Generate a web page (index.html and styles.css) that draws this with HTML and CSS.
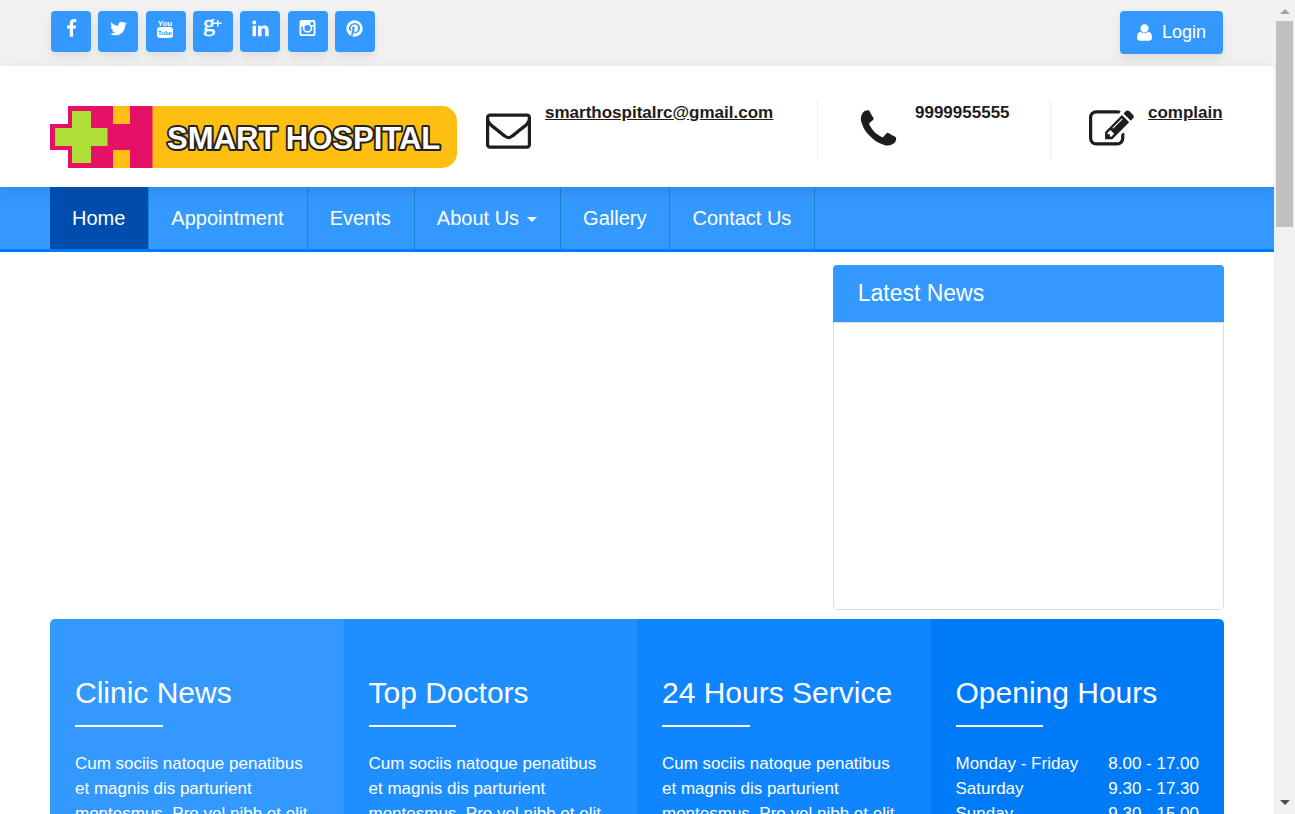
FILE: index.html
```html
<!DOCTYPE html>
<html lang="en">
<head>
<meta charset="utf-8">
<meta name="viewport" content="width=device-width, initial-scale=1">
<title>Smart Hospital</title>
<link rel="stylesheet" href="styles.css">
</head>
<body>
<div class="page">
  <div class="topbar container">
    <ul class="social">
      <li><a class="social-link" href="#" aria-label="Facebook"><svg class="icon" viewBox="0 0 1792 1792"><path d="M1343 12v264h-157q-86 0-116 36t-30 108v189h293l-39 296h-254v759h-306v-759h-255v-296h255v-218q0-186 104-288.500t277-102.500q147 0 228 12z"/></svg></a></li>
      <li><a class="social-link" href="#" aria-label="Twitter"><svg class="icon" viewBox="0 0 1792 1792"><path d="M1684 408q-67 98-162 167 1 14 1 42 0 130-38 259.500t-115.500 248.500-184.500 210.500-258 146-323 54.500q-271 0-496-145 35 4 78 4 225 0 401-138-105-2-188-64.500t-114-159.500q33 5 61 5 43 0 85-11-112-23-185.500-111.500t-73.500-205.500v-4q68 38 146 41-66-44-105-115t-39-154q0-88 44-163 121 149 294.500 238.500t371.500 99.500q-8-38-8-74 0-134 94.500-228.500t228.500-94.500q140 0 236 102 109-21 205-78-37 115-142 178 93-10 186-50z"/></svg></a></li>
      <li><a class="social-link" href="#" aria-label="YouTube"><svg class="icon" viewBox="0 0 19 19"><text class="yt-you" x="9" y="7" text-anchor="middle">You</text><rect x="1" y="8" width="16" height="11" rx="3"/><text class="yt-tube" x="9" y="16" text-anchor="middle">Tube</text></svg></a></li>
      <li><a class="social-link" href="#" aria-label="Google Plus"><svg class="icon" viewBox="0 0 19 19"><text class="gp-g" x="0" y="12">g</text><path d="M14 1h1.500v2.500h3v1.500h-3v2.500h-1.500v-2.500h-3v-1.500h3z"/></svg></a></li>
      <li><a class="social-link" href="#" aria-label="LinkedIn"><svg class="icon" viewBox="0 0 1792 1792"><path d="M477 625v991h-330v-991h330zm21-306q1 73-50.500 122t-135.500 49h-2q-82 0-132-49t-50-122q0-74 51.500-122.500t134.500-48.500 133 48.500 51 122.500zm1166 729v568h-329v-530q0-105-40.500-164.500t-126.500-59.500q-63 0-105.500 34.500t-63.500 85.500q-11 30-11 81v553h-329q2-399 2-647t-1-296l-1-48h329v144h-2q20-32 41-56t56.500-52 87-43.500 114.500-15.500q171 0 275 113.500t104 332.500z"/></svg></a></li>
      <li><a class="social-link" href="#" aria-label="Instagram"><svg class="icon" viewBox="0 0 19 19"><path fill-rule="evenodd" d="M3.500 1h12a2 2 0 0 1 2 2v12a2 2 0 0 1-2 2h-12a2 2 0 0 1-2-2v-12a2 2 0 0 1 2-2zM3.300 7.500v7q0 .7.700.7h11q.7 0 .7-.7v-7h-1.600a4.800 4.800 0 1 1-9.200 0zM13 3q-.6 0-.6.600v1.800q0 .6.600.6h2q.6 0 .6-.6v-1.800q0-.6-.6-.6zM9.500 5.900a3.100 3.100 0 1 0 0 6.200a3.100 3.100 0 1 0 0-6.200z"/></svg></a></li>
      <li><a class="social-link" href="#" aria-label="Pinterest"><svg class="icon" viewBox="0 0 1792 1792"><path d="M1664 896q0 209-103 385.500t-279.500 279.500-385.500 103q-111 0-218-32 59-93 78-164 9-34 54-211 20 39 73 67.500t114 28.500q121 0 216-68.500t147-188.500 52-270q0-114-59.500-214t-172.500-163-255-63q-105 0-196 29t-154.500 77-109 110.500-67 129.500-21.500 134q0 104 40 183t117 111q30 12 38-20 2-7 8-31t8-30q6-23-11-43-51-61-51-151 0-151 104.500-259.500t273.500-108.500q151 0 235.500 82t84.500 213q0 170-68.500 289t-175.500 119q-61 0-98-43.500t-23-104.500q8-35 26.500-93.500t30-103 11.500-75.500q0-50-27-83t-77-33q-62 0-105 57t-43 142q0 73 25 122l-99 418q-17 70-13 177-206-91-333-281t-127-423q0-209 103-385.500t279.500-279.500 385.500-103 385.500 103 279.500 279.500 103 385.500z"/></svg></a></li>
    </ul>
    <a class="login" href="#"><svg class="icon" viewBox="0 0 1792 1792" aria-hidden="true"><path d="M1600 1399q0 109-62.500 187t-150.500 78h-982q-88 0-150.500-78t-62.500-187q0-85 8.500-160.500t31.500-152 58.500-131 94-89 134.500-34.500q160 128 377 128t377-128q76 0 134.500 34.500t94 89 58.500 131 31.500 152 8.500 160.500zm-320-887q0 159-112.500 271.500t-271.500 112.500-271.500-112.500-112.500-271.500 112.500-271.500 271.500-112.500 271.500 112.500 112.500 271.500z"/></svg>Login</a>
  </div>

  <header class="header container">
    <a class="brand" href="#" aria-label="Smart Hospital">
      <svg class="logo" viewBox="0 0 407 62">
        <path fill="#ffbf12" d="M100 0h292a15 15 0 0 1 15 15v32a15 15 0 0 1-15 15h-292z"/>
        <path fill="#e51166" d="M18 0h84.500v62h-84.500v-18h-18v-26h18z"/>
        <path fill="#ffbf12" d="M63 0h17v18h-17zM63 44h17v18h-17z"/>
        <path fill="#afdf36" d="M22 5h19v17h16.500v18h-16.500v17h-19v-17h-17v-18h17z"/>
        <text class="logo-text" x="117" y="43">SMART HOSPITAL</text>
      </svg>
    </a>
    <ul class="contacts">
      <li class="contact"><svg class="contact-icon" viewBox="0 0 1792 1792" aria-hidden="true"><path d="M1664 1504v-768q-32 36-69 66-268 206-426 338-51 43-83 67t-86.500 48.500-102.500 24.500h-2q-48 0-102.500-24.500t-86.500-48.500-83-67q-158-132-426-338-37-30-69-66v768q0 13 9.500 22.500t22.500 9.500h1472q13 0 22.500-9.500t9.500-22.500zm0-1051v-24.500l-.5-13-3-12.500-5.500-9-9-7.500-14-2.500h-1472q-13 0-22.500 9.500t-9.500 22.500q0 168 147 284 193 152 401 317 6 5 35 29.500t46 37.500 44.500 31.500 50.500 27.500 43 9h2q20 0 43-9t50.500-27.500 44.500-31.500 46-37.500 35-29.500q208-165 401-317 54-43 100.500-115.500t46.500-131.500zm128-37v1088q0 66-47 113t-113 47h-1472q-66 0-113-47t-47-113v-1088q0-66 47-113t113-47h1472q66 0 113 47t47 113z"/></svg><a class="contact-text contact-mail" href="#">smarthospitalrc@gmail.com</a></li>
      <li class="contact"><svg class="contact-icon" viewBox="0 0 1792 1792" aria-hidden="true"><path d="M1600 1240q0 27-10 70.500t-21 68.500q-21 50-122 106-94 51-186 51-27 0-53-3.500t-57.500-12.500-47-14.500-55.500-20.500-49-18q-98-35-175-83-127-79-264-216t-216-264q-48-77-83-175-3-9-18-49t-20.500-55.500-14.500-47-12.500-57.500-3.500-53q0-92 51-186 56-101 106-122 25-11 68.500-21t70.500-10q14 0 21 3 18 6 53 76 11 19 30 54t35 63.500 31 53.500q3 4 17.500 25t21.500 35.500 7 28.500q0 20-28.500 50t-62 55-62 53-28.500 46q0 9 5 22.500t8.500 20.500 14 24 11.500 19q76 137 174 235t235 174q2 1 19 11.500t24 14 20.500 8.500 22.500 5q18 0 46-28.500t53-62 55-62 50-28.500q14 0 28.500 7t35.500 21.500 25 17.500q25 15 53.500 31t63.500 35 54 30q70 35 76 53 3 7 3 21z"/></svg><span class="contact-text contact-phone">9999955555</span></li>
      <li class="contact"><svg class="contact-icon" viewBox="0 0 1792 1792" aria-hidden="true"><path d="M888 1184l116-116-152-152-116 116v56h96v96h56zm440-720q-16-16-33 1l-350 350q-17 17-1 33t33-1l350-350q17-17 1-33zm80 594v190q0 119-84.500 203.500t-203.500 84.500h-832q-119 0-203.500-84.500t-84.500-203.500v-832q0-119 84.500-203.500t203.500-84.500h832q63 0 117 25 15 7 18 23 3 17-9 29l-49 49q-14 14-32 8-23-6-45-6h-832q-66 0-113 47t-47 113v832q0 66 47 113t113 47h832q66 0 113-47t47-113v-126q0-13 9-22l64-64q15-15 35-7t20 29zm-96-738l288 288-672 672h-288v-288zm444 132l-92 92-288-288 92-92q28-28 68-28t68 28l152 152q28 28 28 68t-28 68z"/></svg><a class="contact-text contact-complain" href="#">complain</a></li>
    </ul>
  </header>

  <nav class="nav container">
    <a class="nav-link active" href="#">Home</a>
    <a class="nav-link" href="#">Appointment</a>
    <a class="nav-link" href="#">Events</a>
    <a class="nav-link" href="#">About Us<span class="caret"></span></a>
    <a class="nav-link" href="#">Gallery</a>
    <a class="nav-link" href="#">Contact Us</a>
  </nav>

  <main class="main container">
    <div class="hero">
      <div class="slider"></div>
      <section class="news">
        <h2 class="news-title">Latest News</h2>
        <div class="news-body"></div>
      </section>
    </div>
    <div class="features">
      <section class="feature">
        <h3 class="feature-title">Clinic News</h3>
        <p class="feature-text">Cum sociis natoque penatibus et magnis dis parturient montesmus. Pro vel nibh et elit</p>
      </section>
      <section class="feature">
        <h3 class="feature-title">Top Doctors</h3>
        <p class="feature-text">Cum sociis natoque penatibus et magnis dis parturient montesmus. Pro vel nibh et elit</p>
      </section>
      <section class="feature">
        <h3 class="feature-title">24 Hours Service</h3>
        <p class="feature-text">Cum sociis natoque penatibus et magnis dis parturient montesmus. Pro vel nibh et elit</p>
      </section>
      <section class="feature">
        <h3 class="feature-title">Opening Hours</h3>
        <table class="hours">
          <tr><th scope="row">Monday - Friday</th><td>8.00 - 17.00</td></tr>
          <tr><th scope="row">Saturday</th><td>9.30 - 17.30</td></tr>
          <tr><th scope="row">Sunday</th><td>9.30 - 15.00</td></tr>
        </table>
      </section>
    </div>
  </main>
</div>
<div class="scrollbar" aria-hidden="true">
  <span class="arrow arrow-up"></span>
  <span class="thumb"></span>
  <span class="arrow arrow-down"></span>
</div>
</body>
</html>
```
FILE: styles.css
```css
* { box-sizing: border-box; }

body {
  margin: 0;
  height: 100vh;
  display: flex;
  overflow: hidden;
  background: #fff;
  color: #1d1d1b;
  font: 17px/25px "Liberation Sans", Arial, sans-serif;
}

ul { margin: 0; padding: 0; list-style: none; }
a { color: inherit; text-decoration: none; }
svg { display: block; fill: currentColor; overflow: visible; }

.page {
  flex: 1;
  min-width: 0;
  overflow-y: auto;
  scrollbar-width: none;
}

.container { padding-left: 50px; padding-right: 50px; }

/* Top bar */
.topbar {
  display: flex;
  justify-content: space-between;
  align-items: flex-start;
  padding-top: 11px;
  padding-bottom: 12px;
  background: #f1f1f1;
}
.social {
  display: flex;
  justify-content: space-between;
  width: 325px;
  padding-left: 1px;
}
.social-link {
  display: flex;
  justify-content: center;
  width: 40px;
  height: 41px;
  padding-top: 8px;
  border-radius: 4px;
  background: #39f;
  color: #fff;
  box-shadow: 0 5px 10px rgba(0, 0, 0, .08);
}
.icon { width: 19px; height: 19px; }
.yt-you { font: bold 8px "Liberation Sans", sans-serif; }
.yt-tube { font: bold 6px "Liberation Sans", sans-serif; fill: #39f; }
.gp-g { font: 24px "Liberation Serif", serif; stroke: currentColor; stroke-width: .5px; }

.login {
  display: flex;
  align-items: center;
  gap: 8px;
  height: 43px;
  margin-right: 1px;
  padding: 0 17px 0 15px;
  border-radius: 4px;
  background: #39f;
  color: #fff;
  font-size: 18px;
  box-shadow: 0 5px 10px rgba(0, 0, 0, .08);
}

/* Header */
.header {
  position: relative;
  display: flex;
  justify-content: space-between;
  align-items: flex-start;
  padding-top: 34px;
  padding-bottom: 19px;
  background: #fff;
  box-shadow: 0 5px 15px rgba(0, 0, 0, .1);
}
.brand { margin-top: 6px; }
.logo { width: 407px; height: 62px; }
.logo-text {
  font: bold 31px "Liberation Sans", Arial, sans-serif;
  fill: #fff;
  stroke: #24211c;
  stroke-width: 4px;
  stroke-linejoin: round;
  paint-order: stroke;
}
.contacts { display: flex; }
.contact {
  display: flex;
  align-items: flex-start;
  gap: 14px;
  height: 60px;
  padding: 0 37px 0 38px;
  border-right: 1px solid #eee;
}
.contact:first-child { padding-left: 0; }
.contact:last-child { padding-right: 0; border-right: 0; }
.contact-icon { width: 45px; height: 45px; margin-top: 7px; }
.contact-text { font-weight: bold; }
a.contact-text { text-decoration: underline; }
.contact-mail { min-width: 235px; }
.contact-phone { min-width: 98px; }
.contact-complain { min-width: 76px; }

/* Navigation */
.nav {
  display: flex;
  background: #39f;
  border-bottom: 3px solid #007bff;
}
.nav-link {
  display: flex;
  align-items: center;
  height: 62px;
  padding: 0 23px 0 22px;
  border-right: 1px solid #1686d4;
  color: #fff;
  font-size: 20px;
}
.nav-link.active { position: relative; background: #004dad; }
.caret {
  margin-left: 8px;
  margin-top: 3px;
  border: 5px solid transparent;
  border-top-color: currentColor;
  border-bottom: 0;
}

/* Slider and news */
.hero {
  display: grid;
  grid-template-columns: 2fr 1fr;
  padding: 13px 0 9px;
}
.news-title {
  margin: 0;
  padding: 14px 25px 15px;
  border-radius: 4px 4px 0 0;
  background: #39f;
  color: #fff;
  font-size: 23px;
  font-weight: normal;
  line-height: 28px;
}
.news-body {
  min-height: 288px;
  border: 1px solid #ddd;
  border-radius: 0 0 5px 5px;
}

/* Feature columns */
.features {
  display: grid;
  grid-template-columns: repeat(4, 1fr);
  border-radius: 5px 5px 0 0;
  overflow: hidden;
  color: #fff;
}
.feature { padding: 50px 25px; background: #39f; }
.feature:nth-child(2) { background: #1f8eff; }
.feature:nth-child(3) { background: #0f85ff; }
.feature:nth-child(4) { background: #007bf8; }
.feature-title {
  margin: 0 0 24px;
  font-size: 30px;
  font-weight: normal;
  line-height: 48px;
}
.feature-title::after {
  content: "";
  display: block;
  width: 36%;
  height: 2px;
  margin-top: 8px;
  background: #fff;
}
.feature-text { margin: 0; }
.hours { width: 100%; border-collapse: collapse; }
.hours th, .hours td { padding: 0; font-weight: normal; text-align: left; }
.hours td { text-align: right; }

/* Scroll track */
.scrollbar {
  display: flex;
  flex-direction: column;
  align-items: center;
  width: 21px;
  padding: 9px 0;
  background: #f1f1f1;
}
.thumb { width: 17px; height: 206px; margin-top: 7px; background: #c1c1c1; }
.arrow { border: 5px solid transparent; }
.arrow-up { border-top: 0; border-bottom-color: #a3a3a3; }
.arrow-down { margin-top: auto; border-bottom: 0; border-top-color: #505050; }
```
